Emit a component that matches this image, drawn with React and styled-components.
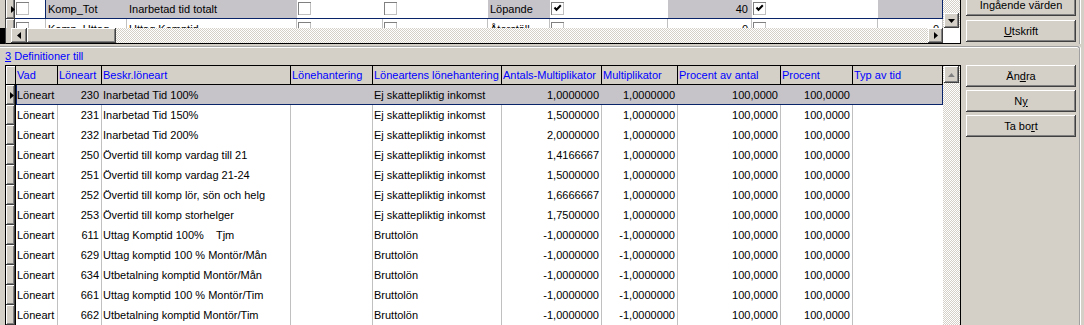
import React from 'react'
import styled, { createGlobalStyle, css } from 'styled-components'

const GlobalStyle = createGlobalStyle`
  html, body { margin: 0; padding: 0; background: #d4d0c8; overflow: hidden; }
  body { font-family: "Liberation Sans", Arial, sans-serif; font-size: 11px; color: #000; }
`

const raised = css`
  background: #d4d0c8;
  box-shadow: inset -1px -1px #404040, inset 1px 1px #fff, inset -2px -2px #808080;
`

const dither = css`
  background: repeating-conic-gradient(#fff 0 25%, #d4d0c8 0 50%) 0 0 / 2px 2px;
`

const Page = styled.div`
  width: 1084px;
  height: 325px;
  overflow: hidden;
  display: flex;
  flex-direction: column;
`

/* ---------- top part ---------- */

const TopSection = styled.div`
  display: flex;
  height: 44px;
  flex-shrink: 0;
`

const LeftStrip = styled.div`
  width: 5px;
  display: flex;
  flex-direction: column;
  justify-content: flex-end;
`

const BlackFoot = styled.div`
  height: 16px;
  background: #000;
`

const TopGrid = styled.div`
  width: 956px;
  height: 44px;
  box-sizing: border-box;
  border-left: 1px solid #404040;
  border-right: 1px solid #000;
  border-bottom: 1px solid #000;
  display: flex;
  flex-direction: column;
`

const TopBody = styled.div`
  height: 28px;
  display: flex;
  overflow: hidden;
`

const IndicatorCol = styled.div`
  width: ${({ $w }) => $w}px;
  display: flex;
  flex-direction: column;
  margin-top: ${({ $shift }) => $shift || 0}px;
`

const Indicator = styled.div`
  ${raised};
  box-sizing: border-box;
  width: ${({ $w }) => $w || 9}px;
  height: 20px;
  flex-shrink: 0;
  display: flex;
  align-items: center;
  justify-content: flex-end;
  padding-right: ${({ $black }) => ($black ? 1 : 0)}px;
  border-right: ${({ $black }) => ($black ? '1px solid #000' : 'none')};
`

const TopRows = styled.div`
  width: 928px;
  display: flex;
  flex-direction: column;
  margin-top: -1px;
`

const TopRow = styled.div`
  position: relative;
  display: flex;
  height: 20px;
  flex-shrink: 0;
  background: #fff;

  ${({ $selected }) =>
    $selected &&
    css`
      &::after {
        content: '';
        position: absolute;
        inset: 0;
        border: 1px solid #0a246a;
        border-top: none;
        border-left: none;
        pointer-events: none;
      }
    `}
`

const TCell = styled.div`
  box-sizing: border-box;
  width: ${({ $w }) => $w}px;
  flex-shrink: 0;
  height: 20px;
  line-height: 20px;
  padding: 0 3px 0 2px;
  white-space: nowrap;
  overflow: hidden;
  text-align: ${({ $right }) => ($right ? 'right' : 'left')};
  background: ${({ $grey }) => ($grey ? '#c6c3c9' : '#fff')};
  border-right: 1px solid ${({ $line }) => $line || 'transparent'};
`

const CheckCell = styled(TCell)`
  padding: 3px 0 0 1px;
`

const Box = styled.div`
  width: 13px;
  height: 13px;
  box-sizing: border-box;
  background: #fff;
  box-shadow: inset 1px 1px #808080, inset -1px -1px #c0c0c0;
  display: flex;
  align-items: center;
  justify-content: center;
`

const TopVScroll = styled.div`
  width: 17px;
  ${dither};
  display: flex;
  flex-direction: column;
  justify-content: flex-end;
`

const ArrowButton = styled.div`
  ${raised};
  width: ${({ $w }) => $w}px;
  height: ${({ $h }) => $h}px;
  margin-left: ${({ $ml }) => $ml || 0}px;
  flex-shrink: 0;
  display: flex;
  align-items: center;
  justify-content: center;
`

const HScroll = styled.div`
  height: 15px;
  display: flex;
`

const HFiller = styled.div`
  width: 5px;
  background: #d4d0c8;
`

const Thumb = styled.div`
  ${raised};
  width: 89px;
`

const Track = styled.div`
  flex: 1;
  ${dither};
`

const Corner = styled.div`
  width: 17px;
  background: #fff;
`

const TopButtons = styled.div`
  width: 119px;
  box-sizing: border-box;
  margin-top: -6px;
  padding-left: 5px;
  display: flex;
  flex-direction: column;
  gap: 4px;
  border-right: 1px solid #a0a0a0;
  box-shadow: 1px 0 #fff;
`

const Button = styled.button`
  appearance: none;
  ${raised};
  border: none;
  padding: 0;
  width: 110px;
  height: 22px;
  flex-shrink: 0;
  font: 400 11px "Liberation Sans", Arial, sans-serif;
  color: #000;
  text-align: center;
`

/* ---------- lower part ---------- */

const BottomSection = styled.div`
  width: 1080px;
  box-sizing: border-box;
  margin-top: 2px;
  flex: 1;
  display: flex;
  border-top: 1px solid #a0a0a0;
  border-right: 1px solid #a0a0a0;
  border-top-right-radius: 3px;
  box-shadow: inset 0 1px #fff, 1px 0 #fff;
`

const LeftColumn = styled.div`
  width: 961px;
  display: flex;
  flex-direction: column;
`

const Caption = styled.div`
  height: 18px;
  box-sizing: border-box;
  padding: 3px 0 0 5px;
  line-height: 13px;
  color: #0000ff;
`

const LowerGrid = styled.div`
  margin-left: 5px;
  width: 956px;
  flex: 1;
  box-sizing: border-box;
  border: 1px solid #000;
  border-bottom: none;
  display: flex;
  overflow: hidden;
`

const GridMain = styled.div`
  width: 937px;
  display: flex;
  flex-direction: column;
`

const HeaderRow = styled.div`
  display: flex;
  height: 19px;
  box-sizing: border-box;
  border-bottom: 1px solid #000;
  flex-shrink: 0;
`

const HeaderIndicator = styled.div`
  width: 10px;
  box-sizing: border-box;
  background: #d4d0c8;
  box-shadow: inset 1px 1px #fff;
  border-right: 1px solid #000;
`

const HeaderCell = styled.div`
  box-sizing: border-box;
  width: ${({ $w }) => $w}px;
  flex-shrink: 0;
  padding-left: 1px;
  line-height: 18px;
  color: #0000ff;
  white-space: nowrap;
  overflow: hidden;
  border-right: 1px solid #000;
`

const DataRow = styled.div`
  display: flex;
  height: 20px;
  flex-shrink: 0;
`

const RowBody = styled.div`
  position: relative;
  width: 927px;
  display: flex;
  background: ${({ $selected }) => ($selected ? '#c6c3c9' : '#fff')};

  ${({ $selected }) =>
    $selected &&
    css`
      &::after {
        content: '';
        position: absolute;
        inset: 0;
        border: 1px solid #0a246a;
        border-top: none;
        pointer-events: none;
      }
    `}
`

const Cell = styled.div`
  box-sizing: border-box;
  width: ${({ $w }) => $w}px;
  flex-shrink: 0;
  line-height: 20px;
  padding: 0 2px 0 1px;
  white-space: pre;
  overflow: hidden;
  text-align: ${({ $right }) => ($right ? 'right' : 'left')};
  border-right: 1px solid ${({ $line }) => ($line ? '#c0c0c0' : 'transparent')};
`

const LowerVScroll = styled.div`
  width: 17px;
  ${dither};
  display: flex;
  flex-direction: column;
`

const BottomButtons = styled.div`
  padding: 18px 0 0 5px;
  display: flex;
  flex-direction: column;
  gap: 3px;
`

/* ---------- glyphs ---------- */

const RowArrow = () => (
  <svg width="4" height="7" viewBox="0 0 4 7">
    <polygon points="0,0 4,3.5 0,7" fill="#000" />
  </svg>
)

const Tri = ({ dir, color = '#000' }) => {
  const pts = {
    up: '0,4 3.5,0 7,4',
    down: '0,0 7,0 3.5,4',
    left: '4,0 4,7 0,3.5',
    right: '0,0 4,3.5 0,7',
  }[dir]
  const vertical = dir === 'up' || dir === 'down'
  return (
    <svg width={vertical ? 7 : 4} height={vertical ? 4 : 7} viewBox={vertical ? '0 0 7 4' : '0 0 4 7'}>
      {color !== '#000' && (
        <polygon points={pts} fill="#fff" transform="translate(1,1)" />
      )}
      <polygon points={pts} fill={color} />
    </svg>
  )
}

const CheckBox = ({ checked }) => (
  <Box>
    {checked && (
      <svg width="9" height="9" viewBox="0 0 9 9">
        <path d="M1.5 3.5 L3.5 5.8 L7.8 1.2" stroke="#000" strokeWidth="2" fill="none" />
      </svg>
    )}
  </Box>
)

/* ---------- data ---------- */

const topCols = [31, 81, 170, 86, 105, 62, 118, 84, 126, 65]

const topRows = [
  {
    selected: true,
    cells: [
      { cb: true },
      { t: 'Komp_Tot', grey: true },
      { t: 'Inarbetad tid totalt', grey: true },
      { cb: true },
      { cb: true },
      { t: 'Löpande', grey: true },
      { cb: true, checked: true },
      { t: '40', grey: true, right: true },
      { cb: true, checked: true },
      { t: '', grey: true },
    ],
  },
  {
    cells: [
      { cb: true },
      { t: 'Komp_Uttag' },
      { t: 'Uttag Komptid' },
      { cb: true },
      { cb: true },
      { t: 'Återställ' },
      { cb: true },
      { t: '0', right: true },
      { cb: true },
      { t: '0', right: true },
    ],
  },
]

const columns = [
  { h: 'Vad', w: 42 },
  { h: 'Löneart', w: 44, right: true },
  { h: 'Beskr.löneart', w: 189 },
  { h: 'Lönehantering', w: 82 },
  { h: 'Löneartens lönehantering', w: 129 },
  { h: 'Antals-Multiplikator', w: 100, right: true },
  { h: 'Multiplikator', w: 76, right: true },
  { h: 'Procent av antal', w: 103, right: true },
  { h: 'Procent', w: 72, right: true },
  { h: 'Typ av tid', w: 90 },
]

const ejs = 'Ej skattepliktig inkomst'
const brutto = 'Bruttolön'

const rows = [
  ['230', 'Inarbetad Tid 100%', ejs, '1,0000000', '1,0000000'],
  ['231', 'Inarbetad Tid 150%', ejs, '1,5000000', '1,0000000'],
  ['232', 'Inarbetad Tid 200%', ejs, '2,0000000', '1,0000000'],
  ['250', 'Övertid till komp vardag till 21', ejs, '1,4166667', '1,0000000'],
  ['251', 'Övertid till komp vardag 21-24', ejs, '1,5000000', '1,0000000'],
  ['252', 'Övertid till komp lör, sön och helg', ejs, '1,6666667', '1,0000000'],
  ['253', 'Övertid till komp storhelger', ejs, '1,7500000', '1,0000000'],
  ['611', 'Uttag Komptid 100%    Tjm', brutto, '-1,0000000', '-1,0000000'],
  ['629', 'Uttag komptid 100 % Montör/Mån', brutto, '-1,0000000', '-1,0000000'],
  ['634', 'Utbetalning komptid Montör/Mån', brutto, '-1,0000000', '-1,0000000'],
  ['661', 'Uttag komptid 100 % Montör/Tim', brutto, '-1,0000000', '-1,0000000'],
  ['662', 'Utbetalning komptid Montör/Tim', brutto, '-1,0000000', '-1,0000000'],
].map(([nr, beskr, hant, antal, mult]) => [
  'Löneart', nr, beskr, '', hant, antal, mult, '100,0000', '100,0000', '',
])

export default function App() {
  return (
    <>
      <GlobalStyle />
      <Page>
        <TopSection>
          <LeftStrip>
            <BlackFoot />
          </LeftStrip>
          <TopGrid>
            <TopBody>
              <IndicatorCol $w={9} $shift={-1}>
                <Indicator><RowArrow /></Indicator>
                <Indicator />
              </IndicatorCol>
              <TopRows>
                {topRows.map((row, ri) => (
                  <TopRow key={ri} $selected={row.selected}>
                    {row.cells.map((c, ci) => {
                      const w = topCols[ci]
                      const line = row.selected
                        ? ci === 0 ? '#0a246a' : undefined
                        : '#c0c0c0'
                      return c.cb ? (
                        <CheckCell key={ci} $w={w} $line={line}>
                          <CheckBox checked={c.checked} />
                        </CheckCell>
                      ) : (
                        <TCell key={ci} $w={w} $grey={c.grey} $right={c.right} $line={line}>
                          {c.t}
                        </TCell>
                      )
                    })}
                  </TopRow>
                ))}
              </TopRows>
              <TopVScroll>
                <ArrowButton $w={15} $h={15} $ml={1}><Tri dir="down" /></ArrowButton>
              </TopVScroll>
            </TopBody>
            <HScroll>
              <HFiller />
              <ArrowButton $w={16} $h={15}><Tri dir="left" /></ArrowButton>
              <Thumb />
              <Track />
              <ArrowButton $w={15} $h={15}><Tri dir="right" /></ArrowButton>
              <Corner />
            </HScroll>
          </TopGrid>
          <TopButtons>
            <Button>Ingående värden</Button>
            <Button><u>U</u>tskrift</Button>
          </TopButtons>
        </TopSection>

        <BottomSection>
          <LeftColumn>
            <Caption><u>3</u> Definitioner till</Caption>
            <LowerGrid>
              <GridMain>
                <HeaderRow>
                  <HeaderIndicator />
                  {columns.map((c) => (
                    <HeaderCell key={c.h} $w={c.w}>{c.h}</HeaderCell>
                  ))}
                </HeaderRow>
                {rows.map((r, ri) => (
                  <DataRow key={ri}>
                    <Indicator $black $w={10}>
                      {ri === 0 && <RowArrow />}
                    </Indicator>
                    <RowBody $selected={ri === 0}>
                      {r.map((v, ci) => (
                        <Cell
                          key={ci}
                          $w={columns[ci].w}
                          $right={columns[ci].right}
                          $line={ri !== 0 && ci < columns.length - 1}
                        >
                          {v}
                        </Cell>
                      ))}
                    </RowBody>
                  </DataRow>
                ))}
              </GridMain>
              <LowerVScroll>
                <ArrowButton $w={15} $h={17} $ml={1}><Tri dir="up" color="#808080" /></ArrowButton>
              </LowerVScroll>
            </LowerGrid>
          </LeftColumn>
          <BottomButtons>
            <Button>Än<u>d</u>ra</Button>
            <Button>N<u>y</u></Button>
            <Button>Ta bo<u>r</u>t</Button>
          </BottomButtons>
        </BottomSection>
      </Page>
    </>
  )
}
